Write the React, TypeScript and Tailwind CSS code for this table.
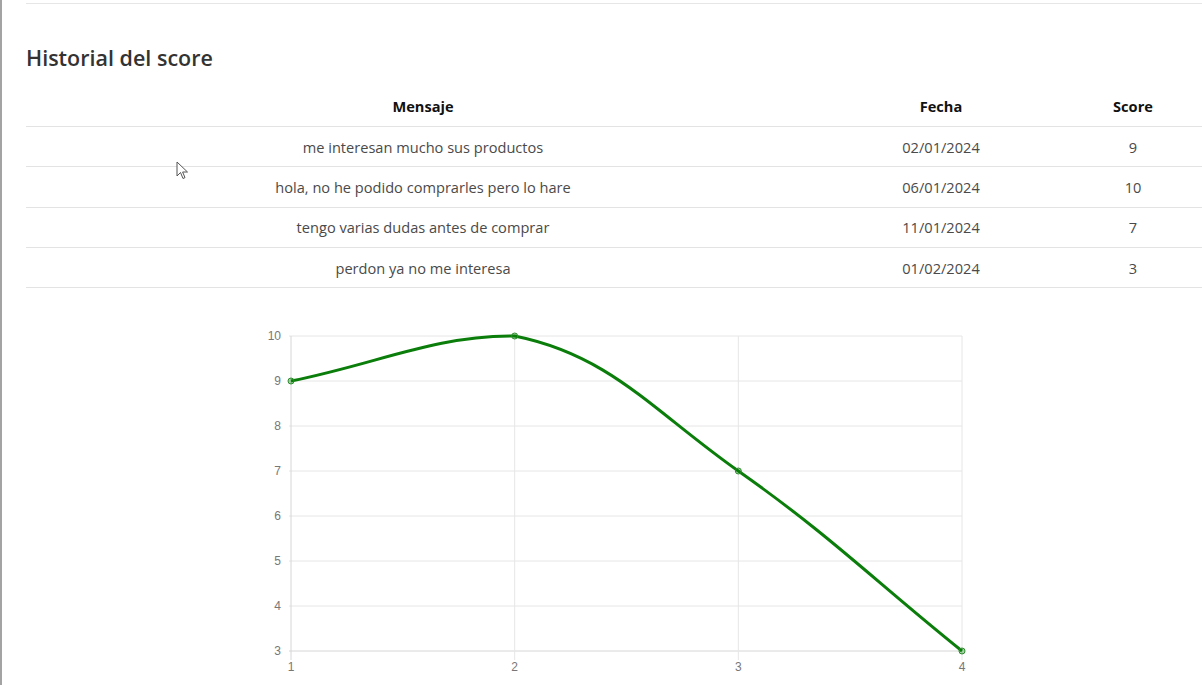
import React from "react";

const rows = [
  { msg: "me interesan mucho sus productos", date: "02/01/2024", score: 9 },
  { msg: "hola, no he podido comprarles pero lo hare", date: "06/01/2024", score: 10 },
  { msg: "tengo varias dudas antes de comprar", date: "11/01/2024", score: 7 },
  { msg: "perdon ya no me interesa", date: "01/02/2024", score: 3 },
];

// chart coords are local to the svg (page x - 240, page y - 300)
const xs = [51, 274.67, 498.33, 722];
const yOf = (v: number) => 36 + (10 - v) * 45;

function ScoreChart() {
  const ticks = [10, 9, 8, 7, 6, 5, 4, 3];
  return (
    <svg width={740} height={400} className="block" style={{ fontFamily: '"Liberation Sans", Arial, sans-serif' }}>
      {/* horizontal grid */}
      {ticks.map((t) => (
        <line key={t} x1={49} x2={722} y1={yOf(t)} y2={yOf(t)} stroke={t === 3 ? "#d6d6d6" : "#e6e6e6"} strokeWidth={1} />
      ))}
      {/* vertical grid */}
      {xs.map((x, i) => (
        <line key={i} x1={x} x2={x} y1={36} y2={360} stroke={i === 0 ? "#d6d6d6" : "#e6e6e6"} strokeWidth={1} />
      ))}
      {ticks.map((t) => (
        <text key={t} x={41} y={yOf(t)} textAnchor="end" dominantBaseline="central" fontSize={12} fill="#777">
          {t}
        </text>
      ))}
      {xs.map((x, i) => (
        <text key={i} x={x} y={367} textAnchor="middle" dominantBaseline="central" fontSize={12} fill="#777">
          {i + 1}
        </text>
      ))}
      <path
        d="M51,81 C140.47,63 191.25,36 274.67,36 C370.17,55.2 413.08,110.97 498.33,171 C592.02,236.97 632.53,279 722,351"
        fill="none"
        stroke="#0a7d0a"
        strokeWidth={3}
      />
      {[9, 10, 7, 3].map((v, i) => (
        <circle key={i} cx={xs[i]} cy={yOf(v)} r={3} fill="rgba(0,128,0,0.35)" stroke="#2e8b2e" strokeWidth={1} />
      ))}
    </svg>
  );
}

export default function App() {
  return (
    <div
      className="relative w-[1202px] h-[685px] overflow-hidden bg-white border-l-2 border-[#a3a3a3]"
      style={{ fontFamily: '"Open Sans", "Noto Sans", sans-serif' }}
    >
      {/* ── top divider ── */}
      <div className="ml-[24px] mt-[3px] h-px bg-[#e6e6e6]" />

      <h4 className="ml-[24px] mt-[41px] text-[21.5px] leading-[26px] font-semibold text-[#333]">Historial del score</h4>

      {/* ── score table ── */}
      <div className="ml-[24px] mt-[16px] w-[1178px] text-[14.6px]">
        <div className="grid grid-cols-[794px_242px_142px] h-[40px] items-center border-b border-[#e3e3e3] font-bold text-[#111] text-center">
          <div>Mensaje</div>
          <div>Fecha</div>
          <div>Score</div>
        </div>
        {rows.map((r) => (
          <div
            key={r.date}
            className="grid grid-cols-[794px_242px_142px] h-[40.3px] pt-[2px] items-center border-b border-[#e3e3e3] text-[#4a4a4a] text-center"
          >
            <div>{r.msg}</div>
            <div>{r.date}</div>
            <div>{r.score}</div>
          </div>
        ))}
      </div>

      <div className="ml-[238px] mt-[12px]">
        <ScoreChart />
      </div>

      {/* mouse pointer left on the page */}
      <svg className="absolute left-[174px] top-[161px]" width={14} height={19} viewBox="0 0 14 19">
        <path d="M1,1 L1,15 L4.5,11.5 L7,17.5 L9,16.6 L6.6,11 L11.5,11 Z" fill="#fff" stroke="#555" strokeWidth={1} strokeLinejoin="round" />
      </svg>
    </div>
  );
}
